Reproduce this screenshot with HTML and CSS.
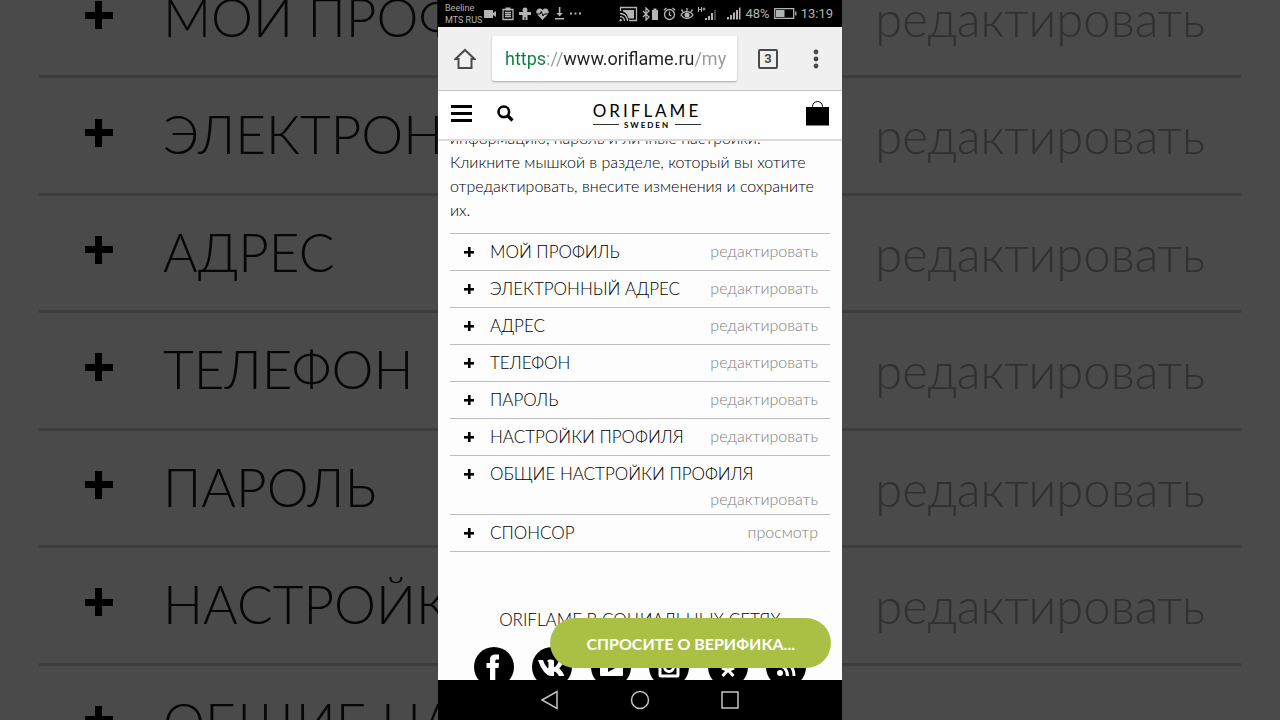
FILE: index.html
```html
<!doctype html>
<html lang="ru">
    <head>
        <meta charset="utf-8">
        <meta name="viewport" content="width=device-width, initial-scale=1">
        <title>Oriflame</title>
        <link rel="stylesheet" href="styles.css">
    </head>
    <body>
        <div class="backdrop" aria-hidden="true">
            <div class="backdrop__row"><i class="plus plus--big"></i><span class="backdrop__title">МОЙ ПРОФИЛЬ</span><span class="backdrop__action">редактировать</span></div>
            <div class="backdrop__row"><i class="plus plus--big"></i><span class="backdrop__title">ЭЛЕКТРОННЫЙ АДРЕС</span><span class="backdrop__action">редактировать</span></div>
            <div class="backdrop__row"><i class="plus plus--big"></i><span class="backdrop__title">АДРЕС</span><span class="backdrop__action">редактировать</span></div>
            <div class="backdrop__row"><i class="plus plus--big"></i><span class="backdrop__title">ТЕЛЕФОН</span><span class="backdrop__action">редактировать</span></div>
            <div class="backdrop__row"><i class="plus plus--big"></i><span class="backdrop__title">ПАРОЛЬ</span><span class="backdrop__action">редактировать</span></div>
            <div class="backdrop__row"><i class="plus plus--big"></i><span class="backdrop__title">НАСТРОЙКИ</span><span class="backdrop__action">редактировать</span></div>
            <div class="backdrop__row"><i class="plus plus--big"></i><span class="backdrop__title">ОБЩИЕ НАСТ</span></div>
        </div>

        <div class="phone">
            <div class="status">
                <div class="status__carrier">Beeline<br>MTS RUS</div>
                <div class="status__icons">
                    <svg width="13" height="12" viewBox="0 0 13 12"><path d="M0 2h9v3l3-2v6l-3-2v3H0z"/></svg>
                    <svg width="12" height="14" viewBox="0 0 12 14"><path class="line" d="M1 2.500h10v10H1zM3 5.500h6M3 7.500h6M3 9.500h6"/><path d="M3.500.5h5v3h-5z"/></svg>
                    <svg width="12" height="14" viewBox="0 0 12 14"><circle cx="6" cy="3" r="2.500"/><path d="M0 5h12v3H8.500v5h-2v-3h-1v3h-2V8H0z"/></svg>
                    <svg width="13" height="12" viewBox="0 0 13 12"><path d="M6.500 12 1.200 6.500C-1 4 1 .5 3.700.5c1.300 0 2.200.7 2.800 1.600C7.100 1.200 8 .5 9.300.5 12 .5 14 4 11.800 6.500z"/><path class="cut" d="M0 6h4l1.300-2.500L7 8l1.300-2H13"/></svg>
                    <svg width="11" height="13" viewBox="0 0 11 13"><path d="M4.800 0h1.600v6h2.300L5.600 9.500 2.400 6h2.400zM1 11h9v1.500H1z"/></svg>
                    <svg width="11" height="3" viewBox="0 0 11 3"><path d="M0 .5h2v2H0zM4.500.5h2v2h-2zM9 .5h2v2H9z"/></svg>
                </div>
                <div class="status__icons status__icons--right">
                    <svg width="19" height="16" viewBox="0 0 19 16"><path class="line" d="M1.500 5V1.500h16v13H10"/><path d="M4 4h11v8.500H9.500C8.500 9 7 6.500 4 5.500z"/><path class="line" d="M1 7.500c4 0 7.500 3 7.500 7.500M1 10.500c2.500 0 4.500 2 4.500 4.500"/><circle cx="1.700" cy="14.200" r="1.200"/></svg>
                    <svg width="17" height="14" viewBox="0 0 17 14"><path class="line" d="m1 4 6 6-3 3V1l3 3-6 6"/><path d="M10 3h1.500V1.500h3V3H16v10h-6z"/></svg>
                    <svg width="13" height="14" viewBox="0 0 13 14"><circle class="line" cx="6.500" cy="7.500" r="5"/><path class="line" d="M6.500 4.500v3.500l2 1M.8 3.200 3.500 1M12.200 3.200 9.500 1"/></svg>
                    <svg width="14" height="13" viewBox="0 0 14 13"><path class="line" d="M1 8c3-4.500 9-4.500 12 0-3 4.500-9 4.500-12 0zM7 4V1M3.200 4.800 1.500 2.500M10.800 4.800l1.700-2.300"/><circle cx="7" cy="8" r="2.500"/></svg>
                    <svg width="20" height="14" viewBox="0 0 20 14"><path class="thin" d="M.5 0v5M3.500 0v5M.5 2.500h3M6 .5v3M4.500 2h3"/><path d="M7 11h2v2H7zM10 9h2v4h-2zM13 6h2v7h-2z"/><path class="dim" d="M16 3h2v10h-2z"/></svg>
                    <svg class="status__signal" width="14" height="13" viewBox="0 0 14 13"><path d="M0 10h2v2.500H0zM3 8h2v4.500H3zM6 5.500h2v7H6zM9 3h2v9.500H9zM12 .5h1.500v12H12z"/></svg>
                    <span class="status__percent">48%</span>
                    <svg width="23" height="11" viewBox="0 0 23 11"><path class="line" d="M.7.700h19v9.600H.7zM21.800 3.500v4"/><path d="M2 2h8.500v7H2z"/></svg>
                    <span class="status__time">13:19</span>
                </div>
            </div>

            <div class="browser">
                <button class="browser__btn" aria-label="Домой">
                    <svg width="22" height="22" viewBox="0 0 22 22"><path d="M1.500 11 11 2l9.500 9H17.500v9H4.500v-9z" fill="none" stroke="#4a4a4a" stroke-width="2"/></svg>
                </button>
                <label class="browser__address">
                    <input class="browser__url" type="text" aria-label="Адрес сайта" value="https://www.oriflame.ru/myprofile">
                </label>
                <button class="browser__tabs" aria-label="Вкладки">3</button>
                <button class="browser__btn" aria-label="Меню">
                    <svg width="6" height="20" viewBox="0 0 6 20"><g fill="#4a4a4a"><circle cx="3" cy="3" r="2.400"/><circle cx="3" cy="10" r="2.400"/><circle cx="3" cy="17" r="2.400"/></g></svg>
                </button>
            </div>

            <header class="header">
                <div class="header__left">
                    <button class="header__btn" aria-label="Меню сайта">
                        <svg width="21" height="17" viewBox="0 0 21 17"><path d="M0 0h21v3H0zM0 7h21v3H0zM0 14h21v3H0z"/></svg>
                    </button>
                    <button class="header__btn" aria-label="Поиск">
                        <svg width="17" height="17" viewBox="0 0 17 17"><circle cx="6.800" cy="6.800" r="5.300" fill="none" stroke="#000" stroke-width="2.600"/><path d="m10.500 10.500 5 5" stroke="#000" stroke-width="3.200"/></svg>
                    </button>
                </div>
                <a class="logo" href="#">
                    <span class="logo__name">ORIFLAME</span>
                    <span class="logo__sub">SWEDEN</span>
                </a>
                <button class="header__btn header__btn--bag" aria-label="Корзина">
                    <svg width="23" height="25" viewBox="0 0 23 25"><path d="M0 6h23v18.500H0z"/><path d="M6.500 7V5.500a5 5 0 0 1 10 0V7" fill="none" stroke="#000"/></svg>
                </button>
            </header>

            <main class="content">
                <p class="content__intro">информацию, пароль и личные настройки.<br>Кликните мышкой в разделе, который вы хотите<br>отредактировать, внесите изменения и сохраните<br>их.</p>
                <ul class="sections">
                    <li class="sections__item"><button class="sections__title"><i class="plus"></i>МОЙ ПРОФИЛЬ</button><a class="sections__action" href="#">редактировать</a></li>
                    <li class="sections__item"><button class="sections__title"><i class="plus"></i>ЭЛЕКТРОННЫЙ АДРЕС</button><a class="sections__action" href="#">редактировать</a></li>
                    <li class="sections__item"><button class="sections__title"><i class="plus"></i>АДРЕС</button><a class="sections__action" href="#">редактировать</a></li>
                    <li class="sections__item"><button class="sections__title"><i class="plus"></i>ТЕЛЕФОН</button><a class="sections__action" href="#">редактировать</a></li>
                    <li class="sections__item"><button class="sections__title"><i class="plus"></i>ПАРОЛЬ</button><a class="sections__action" href="#">редактировать</a></li>
                    <li class="sections__item"><button class="sections__title"><i class="plus"></i>НАСТРОЙКИ ПРОФИЛЯ</button><a class="sections__action" href="#">редактировать</a></li>
                    <li class="sections__item"><button class="sections__title"><i class="plus"></i>ОБЩИЕ НАСТРОЙКИ ПРОФИЛЯ</button><a class="sections__action" href="#">редактировать</a></li>
                    <li class="sections__item"><button class="sections__title"><i class="plus"></i>СПОНСОР</button><a class="sections__action" href="#">просмотр</a></li>
                </ul>

                <h2 class="social__title">ORIFLAME В СОЦИАЛЬНЫХ СЕТЯХ</h2>
                <div class="social">
                    <a href="#" aria-label="Facebook"><svg width="40" height="40" viewBox="0 0 40 40"><circle cx="20" cy="20" r="20"/><path class="glyph" d="M16 34V21h-3.500v-5H16v-3c0-4 2-5.500 5.500-5.500H25v5h-2c-1.300 0-1.700.5-1.700 1.500v2H25l-.5 5h-3.200v13z"/></svg></a>
                    <a href="#" aria-label="ВКонтакте"><svg width="40" height="40" viewBox="0 0 40 40"><circle cx="20" cy="20" r="20"/><path class="glyph" d="M6 13h5c1 3 2.500 6 4.500 8 .8.500 1-.5 1-1.500v-3c0-1.500-.6-2-1.500-2.300.8-1.500 2-1.700 4-1.700 2.500 0 3 .7 3 2.500v4c0 1 .6 1.500 1.300.8 1.700-1.800 3-4 4-6.800h5c-1 3.500-3 6-5 8.500 2 2 4 4 5 7.500h-5.500c-1-2-2.300-3.600-4-4.500-.5 0-.8.4-.8 1.200V29h-2C13 29 9 21 6 13z"/></svg></a>
                    <a href="#" aria-label="YouTube"><svg width="40" height="40" viewBox="0 0 40 40"><circle cx="20" cy="20" r="20"/><rect class="glyph" x="9" y="11" width="23" height="18" rx="1"/><path d="m17 15 9 5-9 5z"/></svg></a>
                    <a href="#" aria-label="Instagram"><svg width="40" height="40" viewBox="0 0 40 40"><circle cx="20" cy="20" r="20"/><rect class="glyph-line" x="11" y="11" width="18" height="18" rx="1"/><circle class="glyph-line" cx="20" cy="20" r="4.500"/></svg></a>
                    <a href="#" aria-label="Одноклассники"><svg width="40" height="40" viewBox="0 0 40 40"><circle cx="20" cy="20" r="20"/><circle class="glyph-line" cx="20" cy="13" r="4"/><path class="glyph-line" d="M14 21c4 2.500 8 2.500 12 0M20 23l-5.500 6M20 23l5.500 6"/></svg></a>
                    <a href="#" aria-label="RSS"><svg width="40" height="40" viewBox="0 0 40 40"><circle cx="20" cy="20" r="20"/><circle class="glyph" cx="14" cy="26" r="3"/><path class="glyph-line" d="M11 18c6 0 10.500 4.500 10.500 11M11 12c9 0 17 7 17 17"/></svg></a>
                </div>
            </main>

            <nav class="navbar">
                <button class="navbar__btn" aria-label="Назад"><svg width="20" height="20" viewBox="0 0 20 20"><path d="M2 10 17 1.500v17z"/></svg></button>
                <button class="navbar__btn" aria-label="Главный экран"><svg width="20" height="20" viewBox="0 0 20 20"><circle cx="10" cy="10" r="8.500"/></svg></button>
                <button class="navbar__btn" aria-label="Недавние"><svg width="20" height="20" viewBox="0 0 20 20"><path d="M2 2h16v16H2z"/></svg></button>
            </nav>

            <button class="chat">СПРОСИТЕ О ВЕРИФИКА...</button>
        </div>
    </body>
</html>
```

FILE: styles.css
```css
* {
    box-sizing: border-box;
}

body {
    background: #4a4a4a;
    display: grid;
    font-family: Lato, "Open Sans", sans-serif;
    grid-template: 100vh / 100%;
    justify-items: center;
    margin: 0;
    overflow: hidden;
}

button {
    background: none;
    border: 0;
    color: inherit;
    cursor: pointer;
    font: inherit;
    padding: 0;
}

a {
    color: inherit;
    text-decoration: none;
}

svg {
    display: block;
}

.plus {
    background:
        linear-gradient(#000, #000) center / 100% 26% no-repeat,
        linear-gradient(#000, #000) center / 26% 100% no-repeat;
    flex: none;
    height: 10px;
    width: 10px;
}

/* enlarged list behind the phone */
.backdrop {
    display: flex;
    flex-direction: column;
    grid-area: 1 / 1;
    height: 100vh;
    overflow: hidden;
    padding: 0 39px;
    width: 100%;
}

.backdrop__row {
    align-items: baseline;
    border-bottom: 3px solid #3d3d3d;
    display: flex;
    flex: none;
    height: calc((100vh + 102px) / 7);
    line-height: 64px;
    padding: 24px 36px 30px 46px;
}

.backdrop__row:first-child {
    margin-top: -39px;
}

.plus--big {
    align-self: center;
    height: 28px;
    width: 28px;
}

.backdrop__title {
    color: #060606;
    font-size: 53px;
    font-weight: 300;
    margin-left: 50px;
    white-space: nowrap;
}

.backdrop__action {
    color: #303030;
    font-size: 49px;
    font-weight: 300;
    margin-left: auto;
}

.phone {
    background: #fdfdfd;
    display: flex;
    flex-direction: column;
    grid-area: 1 / 1;
    height: 100vh;
    max-width: 404px;
    position: relative;
    width: 100%;
}

.status {
    align-items: center;
    background: #000;
    color: #b4b4b4;
    display: flex;
    flex: none;
    font-family: Roboto, sans-serif;
    height: 27px;
    padding: 0 9px 0 7px;
}

.status__carrier {
    font-size: 9px;
    line-height: 12px;
    white-space: nowrap;
}

.status__icons {
    align-items: center;
    display: flex;
    fill: #b4b4b4;
    gap: 5px;
    margin-left: 2px;
}

.status__icons--right {
    gap: 4px;
    margin-left: auto;
}

.status__icons .line {
    fill: none;
    stroke: #b4b4b4;
    stroke-width: 1.3;
}

.status__icons .thin {
    fill: none;
    stroke: #b4b4b4;
}

.status__icons .cut {
    fill: none;
    stroke: #000;
}

.status__icons .dim {
    fill: #444;
}

.status__signal {
    margin-left: 5px;
}

.status__percent,
.status__time {
    font-size: 13px;
}

.browser {
    align-items: center;
    background: #f0f0f0;
    border-bottom: 1px solid #c4c4c4;
    display: flex;
    flex: none;
    height: 64px;
    padding: 0 23px 0 16px;
}

.browser__address {
    background: #fff;
    border-radius: 2px;
    box-shadow: 0 1px 2px rgba(0, 0, 0, .3);
    flex: 1;
    height: 45px;
    margin: 0 21px 0 16px;
    padding: 0 10px 0 13px;
}

/* scheme, host and path get their own colour */
.browser__url {
    background: linear-gradient(90deg, #0b8043 42px, #999 42px 58px, #222 58px 188px, #999 188px) text;
    border: 0;
    color: transparent;
    font-family: Roboto, sans-serif;
    font-size: 18px;
    height: 100%;
    outline: 0;
    padding: 0;
    width: 100%;
}

.browser__tabs {
    border: 2px solid #4a4a4a;
    border-radius: 2px;
    color: #4a4a4a;
    font-family: Roboto, sans-serif;
    font-size: 13px;
    font-weight: 700;
    height: 20px;
    line-height: 16px;
    margin-right: 35px;
    width: 20px;
}

.header {
    align-items: center;
    background: #fefefe;
    border-bottom: 2px solid #dadada;
    display: grid;
    flex: none;
    grid-template-columns: 1fr auto 1fr;
    height: 50px;
    padding: 0 13px 3px;
}

.header__left {
    align-items: center;
    display: flex;
    gap: 25px;
}

.header__btn--bag {
    justify-self: end;
}

.logo {
    display: grid;
    justify-items: center;
    padding: 4px 0 0 14px;
}

.logo__name {
    font-size: 17px;
    letter-spacing: 3px;
    line-height: 18px;
}

.logo__sub {
    align-items: center;
    display: flex;
    font-size: 8px;
    font-weight: 700;
    gap: 5px;
    letter-spacing: 2px;
    line-height: 10px;
    width: 100%;
}

.logo__sub::before,
.logo__sub::after {
    background: #333;
    content: "";
    flex: 1;
    height: 1px;
}

.content {
    flex: 1;
    min-height: 0;
    overflow: hidden;
    padding: 0 12px;
}

.content__intro {
    color: #000;
    font-size: 16px;
    font-weight: 300;
    line-height: 24px;
    margin: -15px 0 11px;
    white-space: nowrap;
}

.sections {
    border-top: 1px solid #bbb;
    list-style: none;
    margin: 0;
    padding: 0;
}

.sections__item {
    align-items: baseline;
    border-bottom: 1px solid #bbb;
    display: flex;
    flex-wrap: wrap;
    padding: 4px 12px 4px 14px;
}

.sections__title {
    align-items: center;
    color: #000;
    display: flex;
    font-size: 17px;
    font-weight: 300;
    gap: 16px;
    line-height: 28px;
}

.sections__action {
    color: #808080;
    font-size: 16px;
    font-weight: 300;
    line-height: 22px;
    margin-left: auto;
}

.social__title {
    font-size: 17px;
    font-weight: 300;
    line-height: 24px;
    margin: 56px 0 15px;
    text-align: center;
    white-space: nowrap;
}

.social {
    display: flex;
    justify-content: space-between;
    padding: 0 24px;
}

.glyph {
    fill: #fff;
}

.glyph-line {
    fill: none;
    stroke: #fff;
    stroke-width: 3;
}

.navbar {
    align-items: center;
    background: #000;
    display: flex;
    flex: none;
    gap: 70px;
    height: 40px;
    justify-content: center;
}

.navbar__btn svg {
    fill: none;
    stroke: #c4c4c4;
    stroke-width: 1.5;
}

.chat {
    background: #a9c045;
    border-radius: 25px;
    bottom: 52px;
    color: #fff;
    font-size: 16px;
    font-weight: 700;
    height: 50px;
    padding: 0 36px;
    position: absolute;
    right: 11px;
    white-space: nowrap;
}
```
